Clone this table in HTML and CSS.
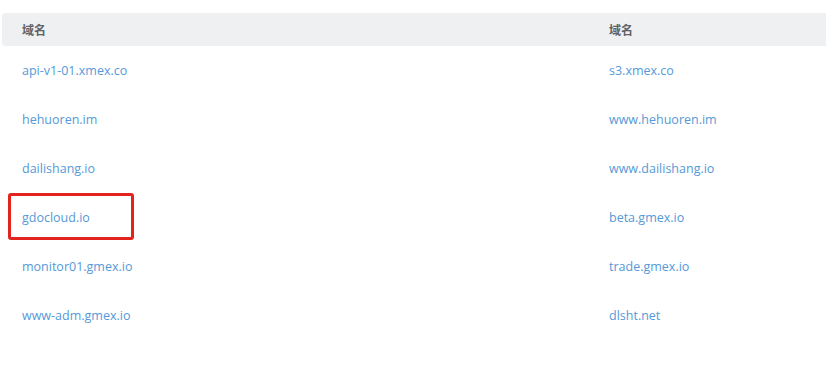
FILE: index.html
```html
<!DOCTYPE html>
<html lang="zh-CN">
<head>
    <meta charset="UTF-8">
    <title>域名</title>
    <link rel="stylesheet" href="styles.css">
</head>
<body>
    <div class="domain-table">
        <div class="head-row">
            <div class="cell">域名</div>
            <div class="cell">域名</div>
        </div>
        <div class="row">
            <div class="cell"><a href="#">api-v1-01.xmex.co</a></div>
            <div class="cell"><a href="#">s3.xmex.co</a></div>
        </div>
        <div class="row">
            <div class="cell"><a href="#">hehuoren.im</a></div>
            <div class="cell"><a href="#">www.hehuoren.im</a></div>
        </div>
        <div class="row">
            <div class="cell"><a href="#">dailishang.io</a></div>
            <div class="cell"><a href="#">www.dailishang.io</a></div>
        </div>
        <div class="row">
            <div class="cell marked"><a href="#">gdocloud.io</a><span class="mark"></span></div>
            <div class="cell"><a href="#">beta.gmex.io</a></div>
        </div>
        <div class="row">
            <div class="cell"><a href="#">monitor01.gmex.io</a></div>
            <div class="cell"><a href="#">trade.gmex.io</a></div>
        </div>
        <div class="row">
            <div class="cell"><a href="#">www-adm.gmex.io</a></div>
            <div class="cell"><a href="#">dlsht.net</a></div>
        </div>
    </div>
</body>
</html>
```

FILE: styles.css
```css
body {
    margin: 0;
    background: #fff;
    font-family: "Open Sans", "Noto Sans CJK SC", sans-serif;
    overflow: hidden;
}

.domain-table {
    margin: 13px 0 0 2px;
}

.head-row,
.row {
    display: grid;
    grid-template-columns: 587px 1fr;
}

.head-row {
    height: 33px;
    background: #eef0f2;
    border-radius: 4px 0 0 4px;
    color: #606266;
    font-size: 12px;
    font-weight: bold;
}

.row {
    height: 49px;
}

.cell {
    display: flex;
    align-items: center;
    padding-left: 20px;
}

.row .cell {
    padding-bottom: 1px;
}

.cell a {
    color: #5599d8;
    font-size: 12.5px;
    text-decoration: none;
}

.marked {
    position: relative;
}

.mark {
    position: absolute;
    left: 6px;
    top: 0;
    width: 126px;
    height: 47px;
    box-sizing: border-box;
    border: 3px solid #e3241c;
    border-radius: 3px;
}
```
